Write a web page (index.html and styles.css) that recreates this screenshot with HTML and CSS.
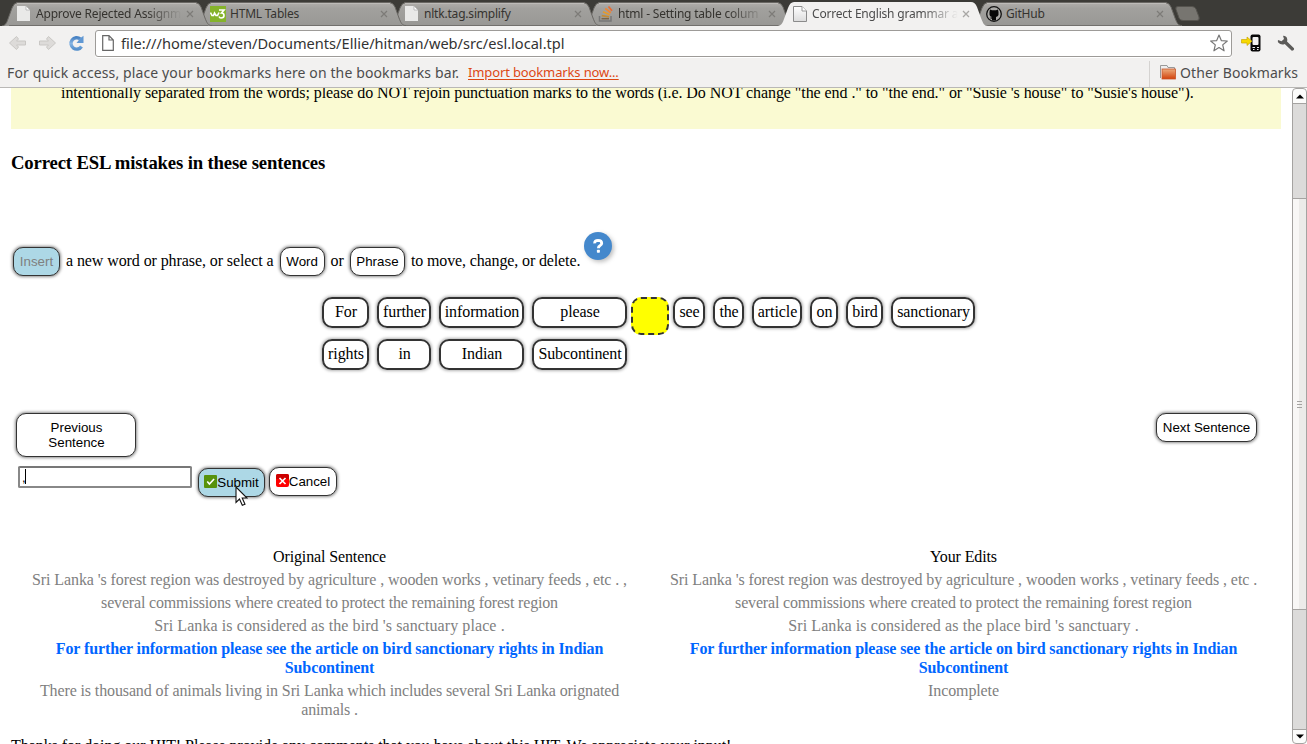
FILE: index.html
```html
<!DOCTYPE html>
<html lang="en">
<head>
<meta charset="utf-8">
<title>Correct English grammar</title>
<link rel="stylesheet" href="styles.css">
</head>
<body>
<svg width="0" height="0" class="defs" aria-hidden="true">
  <defs>
    <linearGradient id="tabfill" x1="0" y1="0" x2="0" y2="1"><stop offset="0" stop-color="#b0aeab"/><stop offset=".25" stop-color="#a2a19e"/><stop offset="1" stop-color="#989794"/></linearGradient>
    <linearGradient id="paper" x1="0" y1="0" x2="0" y2="1"><stop offset="0" stop-color="#fff"/><stop offset="1" stop-color="#dcdcdc"/></linearGradient>
    <linearGradient id="blue" x1="0" y1="0" x2="0" y2="1"><stop offset="0" stop-color="#4b84c4"/><stop offset=".5" stop-color="#86b5e4"/><stop offset="1" stop-color="#5590cc"/></linearGradient>
    <linearGradient id="folder" x1="0" y1="0" x2="0" y2="1"><stop offset="0" stop-color="#ecac7c"/><stop offset="1" stop-color="#d2420c"/></linearGradient>
    <symbol id="tab" viewBox="0 0 210 24"><path d="M0 24C4 23 5 20 6 17L10 6Q12 .5 16 .5H193Q197 .5 199 5L203 16C205 21 206 23.500 210 23.500" fill="url(#tabfill)" stroke="#696763"/><path d="M15 1.500H194" stroke="#bdbbb8"/><path d="M7 23.500H206" stroke="#72706d"/></symbol>
    <symbol id="tabactive" viewBox="0 0 210 24"><path d="M0 24C4 23 5 20 6 17L10 6Q12 0 16 0H193Q197 0 199 5L203 16C205 21 206 24 210 24Z" fill="#f2f1f0"/></symbol>
    <symbol id="page" viewBox="0 0 16 16"><path d="M1.500.5H10L14.500 5V15.500H1.500Z" fill="url(#paper)" stroke="#8b8b8b"/><path d="M10 .5V5H14.500" fill="#fff" stroke="#999"/></symbol>
    <symbol id="pagewhite" viewBox="0 0 16 16"><path d="M1 0H10L14 4V15H1Z" fill="#e9e9e8"/><path d="M10 0V4H14Z" fill="#fff" stroke="#aaa" stroke-width=".7"/></symbol>
    <symbol id="close" viewBox="0 0 8 8"><path d="M1 1L7 7M7 1L1 7" stroke="#7d7b78" stroke-width="1.200"/></symbol>
    <symbol id="closelight" viewBox="0 0 8 8"><path d="M1 1L7 7M7 1L1 7" stroke="#a9a7a5" stroke-width="1.300"/></symbol>
  </defs>
</svg>
<header class="chrome">
  <div class="tabs">
    <div class="tab t1"><svg class="shape"><use href="#tab"/></svg><svg class="fav"><use href="#pagewhite"/></svg><span class="tt fade">Approve Rejected Assignm</span><svg class="x"><use href="#close"/></svg></div>
    <div class="tab t2"><svg class="shape"><use href="#tab"/></svg><svg class="fav" viewBox="0 0 16 16"><rect width="16" height="16" fill="#85b32b"/><path d="M.5 6.500L2 9.500H3.500L4.500 7L6 9.500H7.500L9 6.500M9 4H14L11.500 7Q14 7 14 9.500Q14 12 11 12Q9.500 12 9 10.500" fill="none" stroke="#fff" stroke-width="1.600"/></svg><span class="tt">HTML Tables</span><svg class="x"><use href="#close"/></svg></div>
    <div class="tab t3"><svg class="shape"><use href="#tab"/></svg><svg class="fav"><use href="#pagewhite"/></svg><span class="tt">nltk.tag.simplify</span><svg class="x"><use href="#close"/></svg></div>
    <div class="tab t4"><svg class="shape"><use href="#tab"/></svg><svg class="fav" viewBox="0 0 16 16"><path d="M1.500 10V15H13V10" fill="none" stroke="#777" stroke-width="1.500"/><path d="M3.500 12.700H11" stroke="#77664c" stroke-width="1.500"/><path d="M3.700 9.700L11 10.800" stroke="#c38b35" stroke-width="1.700"/><path d="M5 5.800L11.700 8.700" stroke="#e79a28" stroke-width="1.700"/><path d="M7.300 2.500L12.800 6.700" stroke="#ee8733" stroke-width="1.700"/><path d="M10.500.5L14 4.800" stroke="#ea6a30" stroke-width="1.700"/></svg><span class="tt fade">html - Setting table colum</span><svg class="x"><use href="#close"/></svg></div>
    <div class="tab active"><svg class="shape"><use href="#tabactive"/></svg><svg class="fav"><use href="#page"/></svg><span class="tt fade">Correct English grammar a</span><svg class="x"><use href="#closelight"/></svg></div>
    <div class="tab t6"><svg class="shape"><use href="#tab"/></svg><svg class="fav" viewBox="0 0 16 16"><circle cx="8" cy="8" r="7.300" fill="#aaa9a6" stroke="#111" stroke-width="1.300"/><path d="M4 3.500L6 4.300H10L12 3.500L12.500 6V9Q12 10.500 10 11V14.500H6V12.500Q4.500 13 3.500 11.500Q5 12 6 11Q3.500 10.500 3.500 8.500V6Z" fill="#080808"/></svg><span class="tt">GitHub</span><svg class="x"><use href="#close"/></svg></div>
    <svg class="newtab" viewBox="0 0 26 16"><path d="M3 .5H17Q20 .5 21 3L24 11Q25 14.500 22 14.500H8Q5 14.500 4 12L1 3.500Q0 .5 3 .5Z" fill="#777570" stroke="#55534e"/></svg>
  </div>
  <div class="toolbar">
    <svg class="back" viewBox="0 0 19 16"><path d="M8.500 1.500L1.500 8L8.500 14.500L10.500 12L8.500 10H17.500V6H8.500L10.500 4Z" fill="#dddbd9" stroke="#c9c7c4" stroke-linejoin="round"/></svg>
    <svg class="fwd" viewBox="0 0 19 16"><path d="M10.500 1.500L17.500 8L10.500 14.500L8.500 12L10.500 10H1.500V6H10.500L8.500 4Z" fill="#dddbd9" stroke="#c9c7c4" stroke-linejoin="round"/></svg>
    <svg class="reload" viewBox="0 0 16 17"><path d="M12.300 4A5.700 5.700 0 1 0 13.500 11.500" fill="none" stroke="url(#blue)" stroke-width="3.400"/><path d="M15.500.8V8H8.500L10.500 5.500L12.500 3Z" fill="#6098d3"/></svg>
    <div class="omnibox">
      <svg class="doc" viewBox="0 0 12 16"><path d="M.7.7H7L11.300 5V15.300H.7ZM7 .7V5H11.300" fill="#fff" stroke="#666" stroke-width="1.200"/></svg>
      <span class="url">file:///home/steven/Documents/Ellie/hitman/web/src/esl.local.tpl</span>
      <svg class="star" viewBox="0 0 18 18"><path d="M9 1L11.300 6.600L17.300 7L12.700 10.900L14.100 16.800L9 13.600L3.900 16.800L5.300 10.900L.7 7L6.700 6.600Z" fill="#fff" stroke="#777" stroke-width="1.200" stroke-linejoin="round"/></svg>
    </div>
    <svg class="phone" viewBox="0 0 20 18"><rect x="9.500" y=".5" width="10" height="17" rx="2" fill="#080808"/><rect x="11.500" y="3" width="6" height="8" rx="1" fill="#f4f3f2"/><path d="M11.500 13.500H14M16 13.500H18M12 15.500H13.500M16 15.500H17.500" stroke="#eee"/><path d="M.5 5.500H6V3L11 7.200L6 11.500V9H.5Z" fill="#f7d900" stroke="#cba800" stroke-width=".7"/></svg>
    <svg class="wrench" viewBox="0 0 18 17"><path d="M6 .8Q10 .8 10.300 4.500Q10.300 6 10 6.500L17 13.200Q17.500 15.500 14.800 15.800L7.700 9Q4 10.500 1.200 7.500Q.5 6 1 5L4.500 6.300L7 4Z" fill="#5c5b59"/></svg>
  </div>
  <div class="bookmarks">
    <span class="bmtext">For quick access, place your bookmarks here on the bookmarks bar.</span>
    <span class="import">Import bookmarks now...</span>
    <div class="other"><svg class="folder" viewBox="0 0 16 15"><path d="M.5 13V.5H7L8 2.500H14.500V6" fill="#eee" stroke="#999"/><path d="M1.500 13V4.500H13" fill="none" stroke="#fff"/><rect x="2" y="4" width="13.500" height="10" fill="url(#folder)" stroke="#c8562b" stroke-width=".8"/></svg><span class="othertext">Other Bookmarks</span></div>
  </div>
</header>
<div class="viewport">
  <main class="content">
    <div class="notice"><span>intentionally separated from the words; please do NOT rejoin punctuation marks to the words (i.e. Do NOT change "the end ." to "the end." or "Susie 's house" to "Susie's house").</span></div>
    <h3 class="heading">Correct ESL mistakes in these sentences</h3>
    <div class="modes">
      <button class="btn on insert">Insert</button><span class="lead">a new word or phrase, or select a</span><button class="btn word">Word</button><span>or</span><button class="btn phrase">Phrase</button><span class="tail">to move, change, or delete.</span>
      <svg class="help" viewBox="0 0 36 36"><circle cx="16" cy="16" r="14" fill="#4488cc"/><path d="M12.700 13.300Q12.500 10.500 16 10.400Q19.700 10.400 19.700 13.200Q19.700 14.800 17.900 15.700Q16.400 16.500 16.400 18.200" fill="none" stroke="#fff" stroke-width="2.900"/><rect x="14.900" y="19.700" width="3" height="3" rx=".7" fill="#fff"/></svg>
    </div>
    <div class="words">
      <span class="w">For</span><span class="w">further</span><span class="w">information</span><span class="w">please</span><span class="slot"></span><span class="w">see</span><span class="w">the</span><span class="w">article</span><span class="w">on</span><span class="w">bird</span><span class="w">sanctionary</span>
      <span class="w">rights</span><span class="w">in</span><span class="w">Indian</span><span class="w">Subcontinent</span>
    </div>
    <div class="nav"><button class="btn prev">Previous<br>Sentence</button><button class="btn next">Next Sentence</button></div>
    <div class="entry">
      <div class="field">,<i class="caret"></i></div>
      <button class="btn on submit"><svg class="ico" viewBox="0 0 12 12"><rect width="12" height="12" rx="1" fill="#57920c"/><path d="M3 6L5 8.300L9.300 3.700" fill="none" stroke="#fff" stroke-width="1.500"/></svg>Submit<svg class="cursor" viewBox="0 0 13 21"><path d="M1 1V16.500L4.500 13L7.300 19.300L10 18.200L7.200 12H12Z" fill="#fff" stroke="#111" stroke-width="1.100"/></svg></button>
      <button class="btn cancel"><svg class="ico" viewBox="0 0 13 13"><rect width="13" height="13" rx="2" fill="#f00"/><path d="M0 5V2Q0 0 2 0H11Q13 0 13 2V5Z" fill="#c00"/><path d="M3.500 4L9.500 10M9.500 4L3.500 10" stroke="#fff" stroke-width="1.700"/></svg>Cancel</button>
    </div>
    <div class="compare">
      <div class="col left"><p class="title">Original Sentence</p><p class="first">Sri Lanka 's forest region was destroyed by agriculture , wooden works , vetinary feeds , etc . ,</p><p class="second">several commissions where created to protect the remaining forest region</p><p class="third">Sri Lanka is considered as the bird 's sanctuary place .</p><p class="current">For further information please see the article on bird sanctionary rights in Indian<br>Subcontinent</p><p class="last">There is thousand of animals living in Sri Lanka which includes several Sri Lanka orignated<br>animals .</p></div>
      <div class="col right"><p class="title">Your Edits</p><p class="first">Sri Lanka 's forest region was destroyed by agriculture , wooden works , vetinary feeds , etc .</p><p class="second">several commissions where created to protect the remaining forest region</p><p class="third">Sri Lanka is considered as the place bird 's sanctuary .</p><p class="current">For further information please see the article on bird sanctionary rights in Indian<br>Subcontinent</p><p class="last">Incomplete</p></div>
    </div>
    <p class="thanks">Thanks for doing our HIT! Please provide any comments that you have about this HIT. We appreciate your input!</p>
  </main>
  <div class="scrollbar">
    <div class="arrow"><svg viewBox="0 0 8 5"><path d="M0 4.500L4 .5L8 4.500Z"/></svg></div>
    <div class="track"></div>
    <div class="thumb"><i></i><i></i><i></i></div>
    <div class="track grow"></div>
    <div class="arrow down"><svg viewBox="0 0 8 5"><path d="M0 .5L4 4.500L8 .5Z"/></svg></div>
  </div>
</div>
</body>
</html>
```
FILE: styles.css
```css
* { box-sizing: border-box; }
html, body { margin: 0; height: 100%; overflow: hidden; }
body { width: 1307px; height: 744px; display: flex; flex-direction: column; font: 16px/19px "Liberation Serif", serif; color: #000; background: #fff; }
svg { display: block; flex: none; }
.defs { position: absolute; }
.chrome { flex: none; height: 88px; background: #f2f1f0; border-bottom: 1px solid #b9b8b6; font-family: "Noto Sans", sans-serif; color: #4c4c4c; }
.tabs { height: 26px; padding: 2px 0 0 2px; display: flex; background: #3c3b37; }
.tab { position: relative; isolation: isolate; flex: none; width: 210px; height: 24px; margin-right: -16px; padding: 3px 0 0 14px; display: flex; font-size: 12px; letter-spacing: -.2px; line-height: 17px; color: #35332f; }
.t1 { z-index: 6; } .t2 { z-index: 5; } .t3 { z-index: 4; } .t4 { z-index: 3; } .active { z-index: 9; color: #4c4c4c; } .t6 { z-index: 2; }
.shape { position: absolute; z-index: -1; left: 0; top: 0; width: 210px; height: 24px; }
.fav { width: 16px; height: 16px; margin-top: 1px; }
.tt { width: 146px; margin-left: 4px; overflow: hidden; white-space: nowrap; }
.fade { mask-image: linear-gradient(to right, #000 110px, transparent 146px); }
.x { width: 8px; height: 8px; margin: 5px 0 0 4px; }
.newtab { width: 26px; height: 16px; margin: 4px 0 0 9px; }
.toolbar { height: 35px; display: flex; align-items: center; padding: 0 0 1px 8px; }
.back, .fwd { width: 19px; height: 16px; }
.fwd { margin-left: 11px; }
.reload { width: 16px; height: 17px; margin-left: 11px; }
.omnibox { width: 1137px; height: 27px; margin-left: 11px; border: 1px solid #9d9b98; border-radius: 3px; background: #fff; display: flex; align-items: center; padding: 0 3px 0 6px; box-shadow: 0 1px 0 #fff; }
.doc { width: 12px; height: 16px; }
.url { flex: 1; margin-left: 7px; font-size: 14.6px; white-space: nowrap; color: #333; }
.star { width: 18px; height: 18px; }
.phone { width: 20px; height: 18px; margin-left: 9px; }
.wrench { width: 18px; height: 17px; margin-left: 16px; }
.bookmarks { height: 26px; display: flex; padding-left: 7px; font-size: 14px; letter-spacing: .12px; line-height: 23px; white-space: nowrap; }
.bmtext { width: 461px; }
.import { font-size: 13px; letter-spacing: -.13px; color: #dd4814; text-decoration: underline; text-underline-offset: 2px; }
.other { margin-left: auto; width: 158px; display: flex; padding-left: 10px; border-left: 1px solid #d5d3d1; }
.folder { width: 16px; height: 15px; margin: 4px 4px 0 0; }
.viewport { flex: 1; min-height: 0; display: flex; overflow: hidden; }
.content { width: 1292px; padding-left: 11px; overflow: hidden; white-space: nowrap; }
.notice { display: flow-root; width: 1270px; height: 41px; background: #fafad2; padding-left: 50px; letter-spacing: -.068px; }
.notice span { display: block; margin-top: -5px; }
.heading { margin: 23px 0 0; font-size: 18.72px; line-height: 22px; letter-spacing: -.155px; }
.modes { display: flex; height: 29px; margin-top: 73px; padding-left: 2px; gap: 6px; line-height: 28px; }
.modes span { flex: none; }
.lead { letter-spacing: -.09px; }
.tail { letter-spacing: -.13px; }
.btn { flex: none; font: 13.333px/15px "Liberation Sans", sans-serif; color: #000; background: #fff; border: 1px solid #333; border-radius: 10px; padding: 0; height: 29px; box-shadow: 0 0 3px 1px rgba(0,0,0,.45); text-align: center; }
.on { background: #add8e6; }
.insert { width: 47px; color: #808080; }
.word { width: 45px; }
.phrase { width: 55px; }
.help { width: 36px; height: 36px; margin: -17px 0 0 -4px; filter: drop-shadow(2px 2px 2px rgba(0,0,0,.25)); }
.words { margin: 21px 0 0 311px; display: grid; grid-template-columns: 47px 54px 85px 95px 30px 32px 31px 50px 28px 37px 84px; grid-template-rows: 31px 31px; gap: 11px 8px; }
.w { border: 2px solid #333; border-radius: 10px; padding-left: 1px; text-align: center; line-height: 26px; letter-spacing: -.1px; box-shadow: 0 0 3px 1px rgba(0,0,0,.3); }
.slot { width: 38px; height: 38px; margin-left: -4px; border: 2px dashed #333; border-radius: 10px; background: #ff0; }
.nav { display: flex; justify-content: space-between; align-items: flex-start; margin: 43px 35px 0 5px; }
.prev { width: 120px; height: 44px; padding-left: 1px; }
.next { width: 101px; }
.entry { display: flex; margin-top: 9px; padding-left: 7px; }
.field { width: 174px; height: 22px; border: 2px solid #888; border-top-color: #777; border-radius: 2px; padding-left: 2px; display: flex; font: 13.333px/19px "Liberation Sans", sans-serif; letter-spacing: -1px; }
.caret { width: 1px; height: 15px; margin-top: 1px; background: #000; }
.submit, .cancel { display: flex; align-items: center; justify-content: center; }
.submit { position: relative; width: 67px; margin: 2px 0 0 6px; }
.cancel { width: 68px; margin: 1px 0 0 4px; }
.ico { width: 13px; height: 13px; margin-top: -3px; }
.cursor { position: absolute; left: 36px; top: 17px; width: 13px; height: 21px; }
.compare { display: flex; margin-top: 50px; height: 189px; }
.col { width: 634px; text-align: center; color: #808080; }
.col p { margin: 0 0 4px; }
.left { margin-left: 1.5px; }
.col .title { color: #000; letter-spacing: -.12px; }
.first { letter-spacing: -.094px; }
.second { letter-spacing: -.165px; }
.third { letter-spacing: .09px; }
.last { letter-spacing: -.12px; }
.col .current { color: #06f; font-weight: bold; letter-spacing: -.1px; }
.thanks { margin: 0; letter-spacing: -.055px; }
.scrollbar { width: 15px; display: flex; flex-direction: column; border: 1px solid #a5a3a1; border-radius: 4px; background: #fcfcfb; }
.arrow { height: 14px; display: flex; align-items: center; justify-content: center; }
.arrow svg { width: 8px; height: 5px; }
.track { height: 95px; background: #dcdbda; border-top: 1px solid #a5a3a1; }
.grow { flex: 1; height: auto; border: 0; }
.thumb { height: 412px; border: solid #a5a3a1; border-width: 1px 0; background: linear-gradient(90deg, #f8f7f6 50%, #ecebe9 50%); display: flex; flex-direction: column; gap: 2px; align-items: center; justify-content: center; }
.thumb i { width: 5px; height: 1px; background: #a5a3a1; }
.down { border-top: 1px solid #a5a3a1; }
```
